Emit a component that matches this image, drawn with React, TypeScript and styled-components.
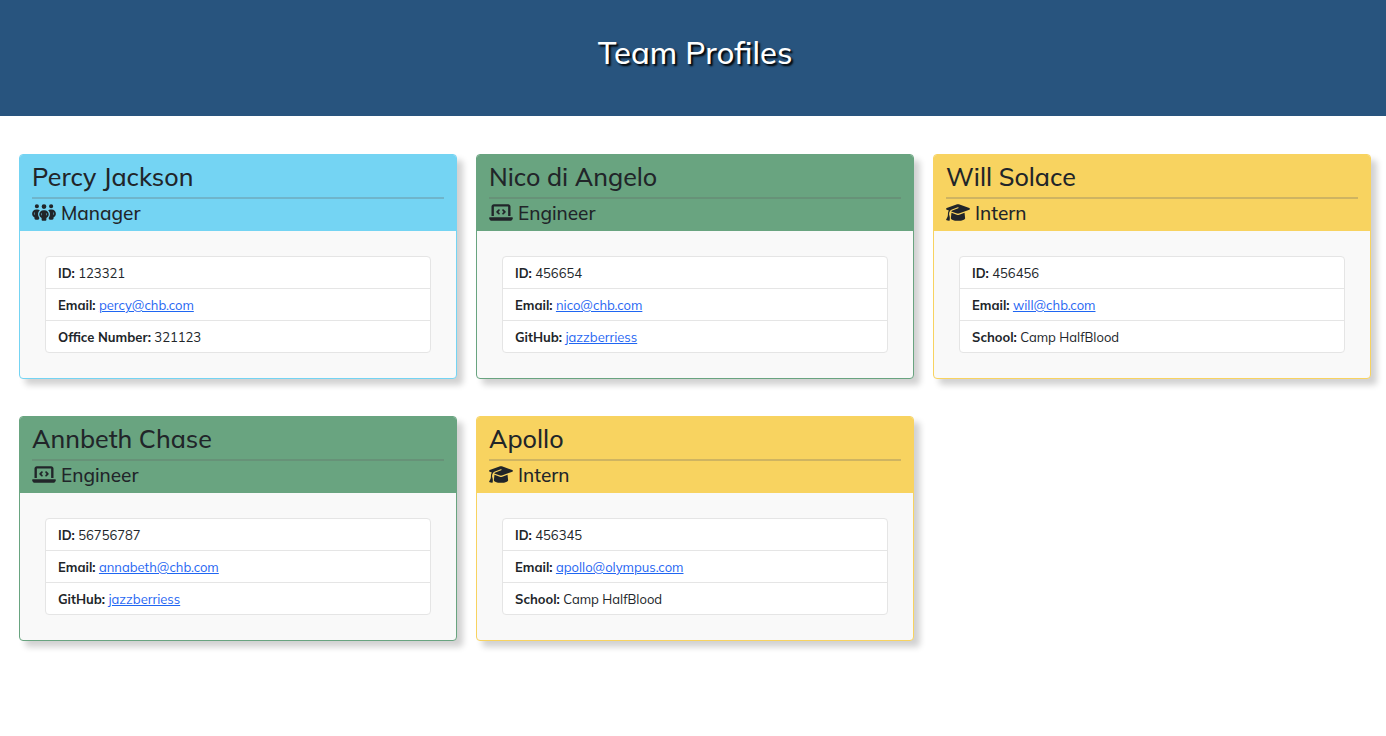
import React from "react";
import styled, { createGlobalStyle } from "styled-components";
import { FaGraduationCap, FaLaptopCode, FaPeopleGroup } from "react-icons/fa6";

type Role = "Manager" | "Engineer" | "Intern";

interface Detail {
  label: string;
  value: string;
  href?: string;
}

interface Member {
  name: string;
  role: Role;
  details: Detail[];
}

const roleColor: Record<Role, string> = {
  Manager: "#74d4f3",
  Engineer: "#69a480",
  Intern: "#f8d360",
};

const roleIcon = {
  Manager: FaPeopleGroup,
  Engineer: FaLaptopCode,
  Intern: FaGraduationCap,
};

const email = (value: string): Detail => ({ label: "Email", value, href: `mailto:${value}` });
const github = (value: string): Detail => ({
  label: "GitHub",
  value,
  href: `https://github.com/${value}`,
});

const members: Member[] = [
  {
    name: "Percy Jackson",
    role: "Manager",
    details: [
      { label: "ID", value: "123321" },
      email("percy@chb.com"),
      { label: "Office Number", value: "321123" },
    ],
  },
  {
    name: "Nico di Angelo",
    role: "Engineer",
    details: [{ label: "ID", value: "456654" }, email("nico@chb.com"), github("jazzberriess")],
  },
  {
    name: "Will Solace",
    role: "Intern",
    details: [
      { label: "ID", value: "456456" },
      email("will@chb.com"),
      { label: "School", value: "Camp HalfBlood" },
    ],
  },
  {
    name: "Annbeth Chase",
    role: "Engineer",
    details: [{ label: "ID", value: "56756787" }, email("annabeth@chb.com"), github("jazzberriess")],
  },
  {
    name: "Apollo",
    role: "Intern",
    details: [
      { label: "ID", value: "456345" },
      email("apollo@olympus.com"),
      { label: "School", value: "Camp HalfBlood" },
    ],
  },
];

const GlobalStyle = createGlobalStyle`
  *, *::before, *::after { box-sizing: border-box; }
  body {
    margin: 0;
    background: #fff;
    color: #212529;
    font-family: Mulish, Muli, Lato, "Open Sans", sans-serif;
    font-size: 13px;
    line-height: 19px;
  }
`;

const Banner = styled.header`
  padding: 33px 15px 43px 19px;
  background: #28547e;
  color: #fff;
  text-align: center;
`;

const Title = styled.h1`
  margin: 0;
  font-size: 31px;
  font-weight: 500;
  line-height: 40px;
  text-shadow: 2px 2px 2px #000;
`;

const Team = styled.main`
  display: grid;
  grid-template-columns: repeat(3, minmax(0, 1fr));
  gap: 37px 19px;
  padding: 38px 15px 38px 19px;
`;

const Card = styled.article<{ $color: string }>`
  border: 1px solid ${(p) => p.$color};
  border-radius: 4px;
  background: #f9f9f9;
  box-shadow: 6px 6px 6px rgba(0, 0, 0, 0.18);
`;

const CardHeader = styled.header<{ $color: string }>`
  padding: 6px 12px;
  border-radius: 3px 3px 0 0;
  background: ${(p) => p.$color};
`;

const Name = styled.h2`
  margin: 0;
  padding-bottom: 4px;
  border-bottom: 2px solid rgba(100, 100, 100, 0.28);
  font-size: 25px;
  font-weight: 500;
  line-height: 32px;
`;

const RoleLine = styled.h3`
  display: flex;
  align-items: center;
  gap: 5px;
  margin: 0;
  padding-top: 2px;
  font-size: 19px;
  font-weight: 500;
  line-height: 24px;

  svg {
    width: 24px;
    height: 19px;
    margin-bottom: 2px;
  }
`;

const CardBody = styled.div`
  padding: 25px;
`;

const DetailList = styled.ul`
  margin: 0;
  padding: 0;
  border: 1px solid #e5e5e5;
  border-radius: 4px;
  background: #fff;
  list-style: none;
`;

const DetailRow = styled.li`
  padding: 7px 12px 5px;

  & + & {
    border-top: 1px solid #e5e5e5;
  }
`;

const Label = styled.strong`
  font-weight: 700;
`;

const DetailLink = styled.a`
  color: #1f66f2;
  text-decoration: underline;
`;

function ProfileCard({ name, role, details }: Member) {
  const Icon = roleIcon[role];
  const color = roleColor[role];
  return (
    <Card $color={color}>
      <CardHeader $color={color}>
        <Name>{name}</Name>
        <RoleLine>
          <Icon aria-hidden="true" />
          {role}
        </RoleLine>
      </CardHeader>
      <CardBody>
        <DetailList>
          {details.map(({ label, value, href }) => (
            <DetailRow key={label}>
              <Label>{label}:</Label> {href ? <DetailLink href={href}>{value}</DetailLink> : value}
            </DetailRow>
          ))}
        </DetailList>
      </CardBody>
    </Card>
  );
}

export default function App() {
  return (
    <>
      <GlobalStyle />
      <Banner>
        <Title>Team Profiles</Title>
      </Banner>
      <Team>
        {members.map((member) => (
          <ProfileCard key={member.name} {...member} />
        ))}
      </Team>
    </>
  );
}
